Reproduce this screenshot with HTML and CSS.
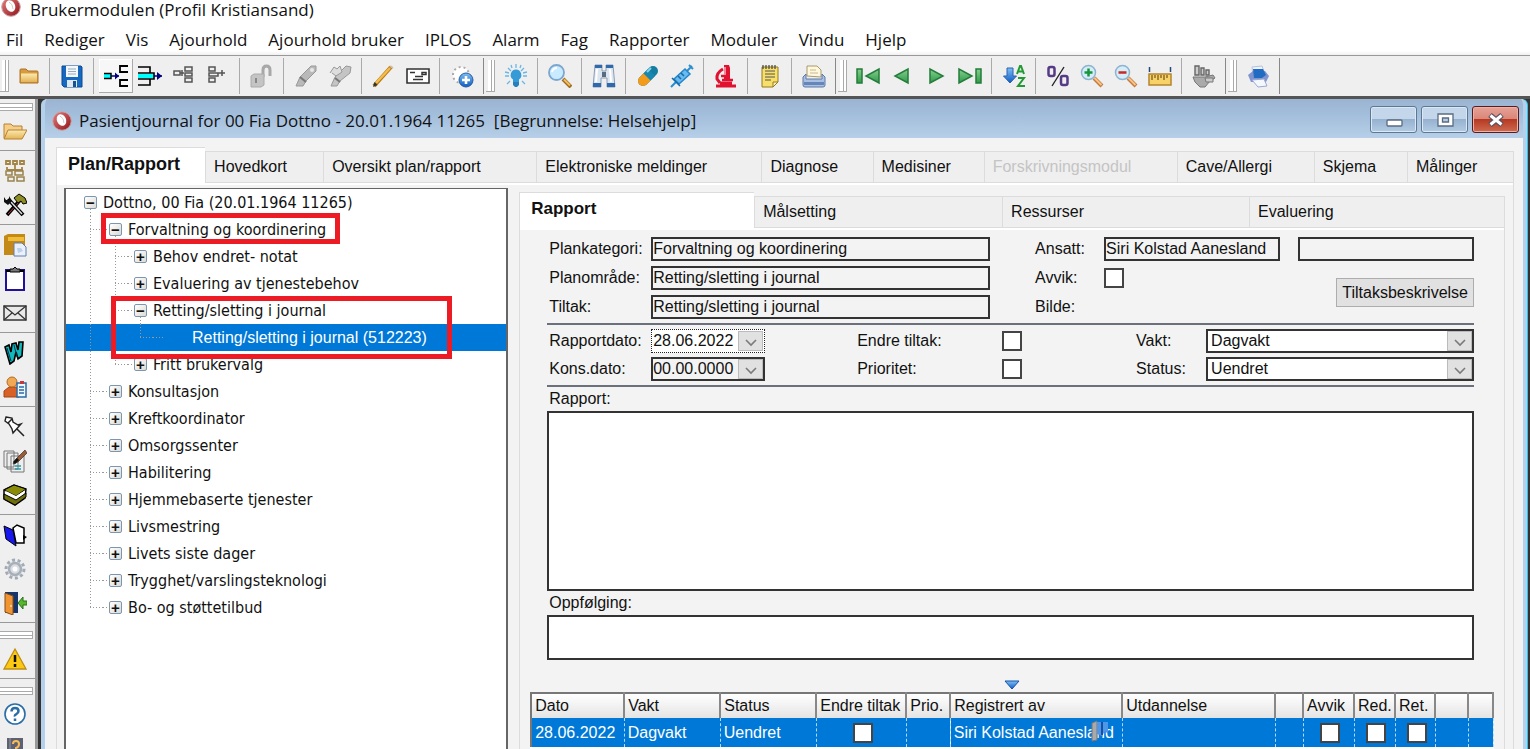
FILE: index.html
```html
<!DOCTYPE html>
<html lang="no">
<head>
<meta charset="utf-8">
<title>Brukermodulen (Profil Kristiansand)</title>
<link rel="stylesheet" href="styles.css">
</head>
<body>
<svg class="defs" aria-hidden="true">
  <defs>
    <linearGradient id="gGold" x1="0" y1="0" x2="0" y2="1"><stop offset="0" stop-color="#fbe9b4"/><stop offset="1" stop-color="#e5b454"/></linearGradient>
    <linearGradient id="gBlue" x1="0" y1="0" x2="0" y2="1"><stop offset="0" stop-color="#7cc0f5"/><stop offset="1" stop-color="#0f5bc4"/></linearGradient>
    <linearGradient id="gGreen" x1="0" y1="0" x2="0" y2="1"><stop offset="0" stop-color="#86cf90"/><stop offset="1" stop-color="#2f9a48"/></linearGradient>
    <linearGradient id="gRed" x1="0" y1="0" x2="1" y2="1"><stop offset="0" stop-color="#e58080"/><stop offset="1" stop-color="#8e1118"/></linearGradient>
    <symbol id="logo" viewBox="0 0 20 20"><circle cx="10" cy="10" r="9.300" fill="url(#gRed)" stroke="#c9a9a9"/><ellipse cx="9.500" cy="9" rx="4.500" ry="6" fill="#fff" transform="rotate(-25 9.500 9)"/><path d="M8 5q4 2 4 7" fill="none" stroke="#ccc"/></symbol>
    <symbol id="chev" viewBox="0 0 16 16"><path d="M3 7l5 5 5-5" fill="none" stroke="#7a7a7a" stroke-width="1.600"/></symbol>
  </defs>
</svg>

<header class="app-title"><svg class="logo"><use href="#logo"/></svg><span>Brukermodulen (Profil Kristiansand)</span></header>
<nav class="menu">
  <button>Fil</button><button>Rediger</button><button>Vis</button><button>Ajourhold</button><button>Ajourhold bruker</button><button>IPLOS</button><button>Alarm</button><button>Fag</button><button>Rapporter</button><button>Moduler</button><button>Vindu</button><button>Hjelp</button>
</nav>

<div class="toolbar">
  <div class="band">
    <i class="grip"></i>
    <div class="grp"><button aria-label="Åpne"><svg viewBox="0 0 24 24"><path d="M3 19V6q0-1 1-1h5l2 2h9q1 0 1 1v11z" fill="#d99c3c" stroke="#a87325"/><path d="M4 9.500h16V18H4z" fill="url(#gGold)"/></svg></button></div>
    <div class="grp"><button aria-label="Lagre"><svg viewBox="0 0 24 24"><path d="M2 2h19l1 1v20H4l-2-2z" fill="#1769c0" stroke="#0b4a94"/><path d="M6 2h12v11H6z" fill="#f4f8fc"/><path d="M8 5h8M8 7.500h8M8 10h8" stroke="#9ab"/><path d="M7 16h10v7H7z" fill="#dfe7ef"/><path d="M13 17h3v6h-3z" fill="#1a4f94"/></svg></button></div>
    <div class="grp"><button class="raised" aria-label="Sett inn"><svg viewBox="0 0 24 24"><path d="M0 9.500h7v5H0" fill="#0ff" stroke="#000" stroke-width="1.500"/><path d="M7 12h8" stroke="#00007a" stroke-width="1.500"/><path d="M11 8.500v7l4-3.500z" fill="#00007a"/><path d="M24 2h-8v6h8M24 16h-8v6h8" fill="none" stroke="#000" stroke-width="1.800"/></svg></button><button aria-label="Flytt ut"><svg viewBox="0 0 24 24"><path d="M0 3h12v6H0M0 15h12v6H0M12 9h4v6h-4" fill="none" stroke="#000" stroke-width="1.600"/><path d="M0 10h15v4H0z" fill="#0ff"/><path d="M16 12h8" stroke="#00007a" stroke-width="1.500"/><path d="M19 8v8l5-4z" fill="#00007a"/></svg></button><button aria-label="Nivå inn"><svg viewBox="0 0 24 24"><path d="M2 7h6v4H2zM13 3h7v4h-7zM13 9h7v3h-7zM13 14h7v4h-7zM8 9h4M10 6v6" fill="none" stroke="#555" stroke-width="1.500"/></svg></button><button aria-label="Nivå ut"><svg viewBox="0 0 24 24"><path d="M3 3h6v4H3zM3 9h9v3H3zM3 14h6v4H3zM12 9h7M16 6v6" fill="none" stroke="#555" stroke-width="1.500"/></svg></button></div>
    <div class="grp"><button aria-label="Lås opp"><svg viewBox="0 0 24 24"><path d="M13 13V6q0-4 3.500-4T20 6v6" fill="none" stroke="#a8a8a8" stroke-width="3"/><path d="M1 12l3-2h10v11l-3 2H1z" fill="#c4c4c4" stroke="#aaa"/><path d="M6 14v5" stroke="#888" stroke-width="2"/></svg></button></div>
    <div class="grp"><button aria-label="Signer"><svg viewBox="0 0 24 24"><path d="M2 22l4-9L17 2l5 0 0 5-10 10-3 5z" fill="#b9b9b9" stroke="#999"/><path d="M6 13l6 5" stroke="#777" stroke-width="2"/><circle cx="18" cy="6" r="2" fill="#e8e8e8"/></svg></button><button aria-label="Signer alle"><svg viewBox="0 0 24 24"><path d="M3 22l4-9L18 2l5 1-1 6-10 8-3 5z" fill="#c4c4c4" stroke="#999"/><path d="M2 9l4-6 3 2 3-3 2 6-6 4-4-3" fill="#ddd" stroke="#999"/><path d="M7 14l5 4" stroke="#777" stroke-width="2"/></svg></button></div>
    <div class="grp"><button aria-label="Rediger"><svg viewBox="0 0 24 24"><path d="M2 22L19 3" stroke="#b87913" stroke-width="4"/><path d="M4 19L18 4" stroke="#f6bd4e" stroke-width="2.400"/><path d="M1 23l1.500-5 3 3z" fill="#333"/><path d="M18 2l3 2" stroke="#d4bca0" stroke-width="2"/></svg></button><button aria-label="Brev"><svg viewBox="0 0 24 24"><path d="M1 5h22v14H1z" fill="#fff" stroke="#333" stroke-width="1.600"/><path d="M4 8.500h5M16 8.500h4v2h-4zM9 12.500h8M7 15.500h10" fill="none" stroke="#333" stroke-width="1.500"/></svg></button></div>
    <div class="grp"><button aria-label="Legg til"><svg viewBox="0 0 24 24"><circle cx="11" cy="11" r="8" fill="#fff" stroke="#aaa" stroke-width="2" stroke-dasharray="2 3"/><circle cx="16" cy="16" r="7" fill="url(#gBlue)" stroke="#295c9e"/><path d="M16 12v8M12 16h8" stroke="#fff" stroke-width="2.600"/></svg></button></div>
  </div>
  <div class="band">
    <i class="grip"></i>
    <div class="grp wide"><button aria-label="Tips"><svg viewBox="0 0 24 24"><path d="M12 0v4M1 12h4M19 12h4M4 4l3 3M20 4l-3 3M3 20l3-3M21 20l-3-3M7 1l1 3M17 1l-1 3M1 8l4 1M23 8l-4 1" stroke="#6bb6e4" stroke-width="1.300"/><path d="M12 5.500a5.500 5.500 0 0 1 3 10V18H9v-2.500a5.500 5.500 0 0 1 3-10z" fill="#359bd6"/><path d="M9 18h6v3l-2 2h-2l-2-2z" fill="#2481bd"/></svg></button></div>
    <div class="grp"><button aria-label="Søk"><svg viewBox="0 0 24 24"><path d="M15 15l8 8" stroke="#a06b1f" stroke-width="4"/><path d="M16 15.500l6 6" stroke="#f0bd62" stroke-width="2"/><circle cx="8.500" cy="8.500" r="7.500" fill="#c9ebff" stroke="#7aa6cf" stroke-width="1.800"/><path d="M4 8q1-4 5-4" fill="none" stroke="#fff" stroke-width="2"/></svg></button></div>
    <div class="grp"><button aria-label="Kikkert"><svg viewBox="0 0 24 24"><path d="M3 1h7v6h4V1h7l2 22h-8v-9H9v9H1z" fill="#dce6f1" stroke="#8b9db5"/><path d="M3 1h7v3H3zM14 1h7v3h-7zM1 19h8v4H1zM15 19h8v4h-8z" fill="#2f6aad"/><path d="M5 5L4 18M18 5l1 13" stroke="#fff" stroke-width="2"/><path d="M10 8h4v5h-4z" fill="#596b80"/></svg></button></div>
    <div class="grp"><button aria-label="Medisin"><svg viewBox="0 0 24 24"><path d="M7 17L17 7" stroke="#157ca2" stroke-width="10" stroke-linecap="round"/><path d="M7 17l4-4" stroke="#f59b1a" stroke-width="10" stroke-linecap="round"/><path d="M7.500 9.500L12 5l7 7-4.500 4.500z" fill="#1988b1"/><path d="M11 8l4-4" stroke="#88d2ea" stroke-width="2"/></svg></button><button aria-label="Vaksine"><svg viewBox="0 0 24 24"><path d="M1 23l5-5M17 7l5-5M19 1l4 4" stroke="#2b8ed0" stroke-width="2"/><path d="M4 15L15 5l5 5L9 20z" fill="#68baf0" stroke="#2386c8" stroke-width="1.500"/><path d="M2 14l8 8M8 12l3 3M11 9l3 3" stroke="#176aa5" stroke-width="1.500"/></svg></button></div>
    <div class="grp"><button aria-label="Laboratorium"><svg viewBox="0 0 24 24"><path d="M10 1h5l1 3v11h-6z" fill="#e01230"/><path d="M9 5Q2 9 3 15l3 4M2 22h20M6 19h12" fill="none" stroke="#e01230" stroke-width="3"/><path d="M7 12h4M8 16h11" stroke="#e01230" stroke-width="2.500"/><path d="M11 3v8" stroke="#fff"/></svg></button></div>
    <div class="grp"><button aria-label="Notat"><svg viewBox="0 0 24 24"><path d="M4 3h16v15l-5 5H4z" fill="#f8df69" stroke="#947b20"/><path d="M7 7h10M7 10h10M7 13h10M7 16h6" stroke="#555"/><path d="M5 1v4M8 1v4M11 1v4M14 1v4M17 1v4" stroke="#444" stroke-width="1.200"/><path d="M15 23v-5h5z" fill="#fff4b0" stroke="#947b20"/></svg></button></div>
    <div class="grp"><button aria-label="Skriv ut"><svg viewBox="0 0 24 24"><path d="M5 12V2h10l4 4v7z" fill="#fff8df" stroke="#a79a70"/><path d="M8 6h6M8 9h8" stroke="#c8b88b"/><path d="M1 13l3-3v5h16v-5l3 3v8q0 2-2 2H3q-2 0-2-2z" fill="#a9c0e2" stroke="#5c78a7"/><path d="M2 18h20v3H2z" fill="#6685b8"/></svg></button></div>
  </div>
  <div class="band">
    <i class="grip"></i>
    <div class="grp wide"><button aria-label="Første"><svg viewBox="0 0 24 24"><path d="M1 5h5v14H1zM23 5v14L10 12z" fill="url(#gGreen)" stroke="#247c3a" stroke-width="1.500"/></svg></button><button aria-label="Forrige"><svg viewBox="0 0 24 24"><path d="M18 5v14L5 12z" fill="url(#gGreen)" stroke="#247c3a" stroke-width="1.500"/></svg></button><button aria-label="Neste"><svg viewBox="0 0 24 24"><path d="M6 5v14l13-7z" fill="url(#gGreen)" stroke="#247c3a" stroke-width="1.500"/></svg></button><button aria-label="Siste"><svg viewBox="0 0 24 24"><path d="M18 5h5v14h-5zM1 5v14l13-7z" fill="url(#gGreen)" stroke="#247c3a" stroke-width="1.500"/></svg></button></div>
    <div class="grp"><button aria-label="Sorter"><svg viewBox="0 0 24 24"><path d="M5 4h6v8h3.500L8 19l-6.500-7H5z" fill="url(#gBlue)" stroke="#2c62ae"/><path d="M15 10l3-8h1l3 8M16 7.500h5M16 14h6l-6 8h7" fill="none" stroke="#229a34" stroke-width="2"/></svg></button></div>
    <div class="grp"><button aria-label="Prosent"><svg viewBox="0 0 24 24"><rect x="2.500" y="3" width="6" height="9" rx="2" fill="none" stroke="#553a85" stroke-width="2.500"/><rect x="15" y="12" width="6.500" height="9" rx="2" fill="none" stroke="#553a85" stroke-width="2.500"/><path d="M6 22L18 3" stroke="#222" stroke-width="1.400"/></svg></button><button aria-label="Zoom inn"><svg viewBox="0 0 24 24"><path d="M14 14l8 8" stroke="#c17c40" stroke-width="4"/><path d="M14.500 14l7 7" stroke="#fbc285" stroke-width="2"/><circle cx="8.500" cy="8.500" r="7" fill="#d5edf8" stroke="#8db4d0" stroke-width="1.500"/><path d="M8.500 4.500v8M4.500 8.500h8" stroke="#18953a" stroke-width="2.500"/></svg></button><button aria-label="Zoom ut"><svg viewBox="0 0 24 24"><path d="M14 14l8 8" stroke="#c17c40" stroke-width="4"/><path d="M14.500 14l7 7" stroke="#fbc285" stroke-width="2"/><circle cx="8.500" cy="8.500" r="7" fill="#d5edf8" stroke="#8db4d0" stroke-width="1.500"/><path d="M4.500 8.500h8" stroke="#c32b25" stroke-width="2.500"/></svg></button><button aria-label="Mål"><svg viewBox="0 0 24 24"><path d="M1.500 3v5M22.500 3v5" stroke="#244b7c" stroke-width="1.500"/><path d="M1 10h22v11H1z" fill="#f6d268" stroke="#b3862e" stroke-width="1.500"/><path d="M4 11v5M7 11v3M10 11v5M13 11v3M16 11v5M19 11v3" stroke="#765315" stroke-width="1.200"/></svg></button></div>
    <div class="grp"><button aria-label="Pleie"><svg viewBox="0 0 24 24"><path d="M3 2h4v9H3zM9 4h3v7H9zM14 6h3v5h-3z" fill="#ccc" stroke="#666" stroke-width="1.400"/><path d="M1 13h12l8-2 2 3-5 3-5 6H8l-5-5z" fill="#aaa" stroke="#777"/><path d="M13 14h8v4h-7z" fill="#ccc" stroke="#777"/></svg></button></div>
  </div>
  <div class="band">
    <i class="grip"></i>
    <div class="grp wide"><button aria-label="Skriver"><svg viewBox="0 0 24 24"><path d="M6 3l10-1 3 8-12 2z" fill="#eef3fc" stroke="#b6c2dc"/><path d="M2 11l5-4h12l4 5-3 6H5z" fill="#8094cf"/><path d="M7 5h10l3 6-4 3H8z" fill="#216cc2"/><path d="M6 16l12-1 3 7-9 1z" fill="#f5f7ff" stroke="#9ca9ce"/></svg></button></div>
  </div>
</div>

<div class="workspace">
  <aside class="side">
    <i class="hgrip"></i>
    <div class="sgrp"><button aria-label="Åpne mappe"><svg viewBox="0 0 24 24"><path d="M1 19V5h7l2 2h9v4" fill="#f3cf89" stroke="#b8812f"/><path d="M1 20l4-9h19l-5 9z" fill="url(#gGold)" stroke="#b8812f"/></svg></button></div>
    <div class="sgrp"><button aria-label="Organisasjon"><svg viewBox="0 0 24 24"><path d="M3 2h4v3H3zM10 2h4v3h-4zM17 2h4v3h-4zM4 8v3M12 6v6M19 8v4M4 11h16" fill="none" stroke="#a38646" stroke-width="1.800"/><path d="M3 12h6v4H3zM12 12h8v4h-8zM5 18h6v4H5zM14 18h7v4h-7z" fill="#eee" stroke="#9b834c" stroke-width="1.500"/></svg></button><button aria-label="Verktøy"><svg viewBox="0 0 24 24"><path d="M4 22L18 6" stroke="#000" stroke-width="3.500"/><path d="M5 21L17 8" stroke="#b33838"/><path d="M11 5l5-4 6 4 2 5-4 1-2-3-3 2z" fill="#8d8d24" stroke="#000"/><path d="M5 6l15 16" stroke="#000" stroke-width="4"/><path d="M8 9l11 12" stroke="#ddd" stroke-width="1.500"/><path d="M1 4v5l4 3 4-4-3-5v4H3z" fill="#111"/></svg></button></div>
    <div class="sgrp"><button aria-label="Dokumenter"><svg viewBox="0 0 24 24"><path d="M1 3l4-2h17v19l-3 2H1z" fill="#c48a18"/><path d="M5 4h16v4H5z" fill="#f0bd38"/><path d="M11 10h8l4 4v9H11z" fill="#eaf1fb" stroke="#607eb0"/><path d="M14 15h4l2 3-5 2z" fill="#bdd0ec"/></svg></button><button aria-label="Utklippstavle"><svg viewBox="0 0 24 24"><path d="M3 3h18v20H3z" fill="#fff" stroke="#20109a" stroke-width="2"/><path d="M3 4h18" stroke="#000" stroke-width="2"/><path d="M7 5V2h3l2-2 2 2h3v3z" fill="#777" stroke="#000"/></svg></button><button aria-label="Melding"><svg viewBox="0 0 24 24"><path d="M1 5h22v14H1z" fill="#e8e8e8" stroke="#333" stroke-width="1.500"/><path d="M1 5l11 9L23 5M1 19l8-7M23 19l-8-7" fill="none" stroke="#333" stroke-width="1.300"/></svg></button></div>
    <div class="sgrp"><button aria-label="Word"><svg viewBox="0 0 24 24"><path d="M2 6l4-2 2 7 1-8 4-1 2 7 1-8 4 0-1 14-4 3-2-7-2 9-4 3z" fill="#12b9b9" stroke="#000" stroke-width="1.600"/><path d="M4 7l4 13M11 4l3 12" stroke="#035"/></svg></button><button aria-label="Bruker"><svg viewBox="0 0 24 24"><path d="M1 22v-6l5-4h7l3 4v6z" fill="#d86125" stroke="#a34717"/><circle cx="9" cy="7" r="5" fill="#f2a955" stroke="#b06c26"/><path d="M14 8h9v14h-9z" fill="#edf7ff" stroke="#2c6ba4" stroke-width="1.500"/><path d="M16 12h5M16 15h5M16 18h5" stroke="#2c6ba4" stroke-width="1.300"/><path d="M17 6h4v3h-4z" fill="#cc3636"/></svg></button></div>
    <div class="sgrp"><button aria-label="Fest"><svg viewBox="0 0 24 24"><path d="M3 2l6 1 1 4 5 3 3-1-8 9-1-4-3-5-4-3z" fill="#fff" stroke="#222" stroke-width="1.400"/><path d="M14 14l7 7M9 4L5 8" stroke="#222" stroke-width="1.500"/></svg></button><button aria-label="Skriv notat"><svg viewBox="0 0 24 24"><path d="M1 2h10v16H1zM4 4h11v16H4zM8 7h13v16H8z" fill="#eee" stroke="#777"/><path d="M10 15l3-5 9-9 2 3-9 9z" fill="#9b5b35" stroke="#333" stroke-width=".7"/><path d="M11 14l4-4" stroke="#111" stroke-width="3"/><path d="M12 17h6M12 20h6" stroke="#2a9ba4" stroke-width="1.500"/></svg></button><button aria-label="Bøker"><svg viewBox="0 0 24 24"><path d="M1 7L11 2l12 4-1 9-10 7L1 16z" fill="#fff" stroke="#000" stroke-width="1.500"/><path d="M1 7L11 2l12 4-10 7z" fill="#8b8b0a" stroke="#000"/><path d="M1 11l12 6 10-7v4l-11 8L1 16z" fill="#6e6e0a" stroke="#000"/><path d="M3 9l10 5 8-5" fill="none" stroke="#fff" stroke-width="1.500"/></svg></button></div>
    <div class="sgrp"><button aria-label="Journal"><svg viewBox="0 0 24 24"><path d="M10 5l4-3 7 3v15h-8z" fill="#fff" stroke="#000" stroke-width="1.500"/><path d="M1 3l9 4 3 16-10-7z" fill="#1717ee" stroke="#000"/><path d="M20 12l4 2-4 3" fill="#000"/></svg></button><button aria-label="Innstillinger"><svg viewBox="0 0 24 24"><circle cx="12" cy="12" r="9" fill="none" stroke="#a2aab5" stroke-width="3" stroke-dasharray="3 2.600"/><circle cx="12" cy="12" r="6" fill="#d9dde2" stroke="#a7afb8" stroke-width="2.500"/><circle cx="12" cy="12" r="2.500" fill="#fff"/></svg></button><button aria-label="Avslutt"><svg viewBox="0 0 24 24"><path d="M2 1h13v21H2z" fill="#15356b"/><path d="M2 2l8 3v19l-8-3z" fill="#f19432" stroke="#874d16"/><path d="M8 14v2" stroke="#fff"/><path d="M24 10h-4V6l-5 6 5 6v-4h4z" fill="#57b52e" stroke="#277217"/></svg></button></div>
    <i class="hgrip"></i>
    <div class="sgrp"><button aria-label="Varsel"><svg viewBox="0 0 24 24"><path d="M12 2l11 20H1z" fill="#fbc914" stroke="#bd8d16" stroke-width="1.300"/><path d="M12 8v7M12 17v3" stroke="#111" stroke-width="2.500"/></svg></button></div>
    <i class="hgrip"></i>
    <div class="sgrp last"><button aria-label="Hjelp"><svg viewBox="0 0 24 24"><circle cx="12" cy="12" r="10" fill="#fff" stroke="#286da7" stroke-width="1.600"/><path d="M8.500 9.500q0-3.500 3.500-3.500t3.500 3q0 2-2 3T12 14.500M12 16.500v2.500" fill="none" stroke="#286da7" stroke-width="2.500"/></svg></button><button aria-label="Hjelpebok"><svg viewBox="0 0 24 24"><path d="M4 2h16v20H4z" fill="#5e6172"/><path d="M7 2v20" stroke="#999"/><path d="M10 8q0-3 3-3t3 3-3 4v2M13 16v2" fill="none" stroke="#f7bd54" stroke-width="2"/></svg></button></div>
  </aside>

  <main class="window">
    <div class="win-title">
      <svg class="logo"><use href="#logo"/></svg>
      <span class="win-name">Pasientjournal for 00 Fia Dottno - 20.01.1964 11265&nbsp; [Begrunnelse: Helsehjelp]</span>
      <span class="win-btns">
        <button aria-label="Minimer"><svg viewBox="0 0 20 16"><rect x="3" y="8" width="15" height="6" rx="1" fill="#fff" stroke="#596b82" stroke-width="1.300"/></svg></button>
        <button aria-label="Maksimer"><svg viewBox="0 0 20 16"><path d="M3 2h15v12H3z" fill="#fff" stroke="#596b82" stroke-width="1.300"/><path d="M7.500 6h6v4h-6z" fill="#b9cbe0" stroke="#596b82" stroke-width="1.300"/></svg></button>
        <button class="close" aria-label="Lukk"><svg viewBox="0 0 20 16"><path d="M4 3l12 10M16 3L4 13" stroke="#555063" stroke-width="5.500"/><path d="M4.500 3.500l11 9M15.500 3.500l-11 9" stroke="#fff" stroke-width="3"/></svg></button>
      </span>
    </div>
    <div class="win-body">
      <div class="tabs main-tabs" role="tablist">
        <button class="tab on">Plan/Rapport</button><button class="tab">Hovedkort</button><button class="tab">Oversikt plan/rapport</button><button class="tab">Elektroniske meldinger</button><button class="tab">Diagnose</button><button class="tab">Medisiner</button><button class="tab off" disabled>Forskrivningsmodul</button><button class="tab">Cave/Allergi</button><button class="tab">Skjema</button><button class="tab">Målinger</button>
      </div>
      <div class="panel">
        <div class="tree">
          <ul>
            <li><i class="c open"><b>−</b></i>Dottno, 00 Fia (20.01.1964 11265)</li>
            <li><i class="c tee"></i><i class="c arm open"><b>−</b></i>Forvaltning og koordinering</li>
            <li><i class="c bar"></i><i class="c tee"></i><i class="c arm"><b>+</b></i>Behov endret- notat</li>
            <li><i class="c bar"></i><i class="c tee"></i><i class="c arm"><b>+</b></i>Evaluering av tjenestebehov</li>
            <li><i class="c bar"></i><i class="c tee"></i><i class="c arm open"><b>−</b></i>Retting/sletting i journal</li>
            <li class="sel"><i class="c bar"></i><i class="c bar"></i><i class="c end"></i><i class="c arm"></i><span class="leaf">Retting/sletting i journal (512223)</span></li>
            <li><i class="c bar"></i><i class="c end"></i><i class="c arm"><b>+</b></i>Fritt brukervalg</li>
            <li><i class="c tee"></i><i class="c arm"><b>+</b></i>Konsultasjon</li>
            <li><i class="c tee"></i><i class="c arm"><b>+</b></i>Kreftkoordinator</li>
            <li><i class="c tee"></i><i class="c arm"><b>+</b></i>Omsorgssenter</li>
            <li><i class="c tee"></i><i class="c arm"><b>+</b></i>Habilitering</li>
            <li><i class="c tee"></i><i class="c arm"><b>+</b></i>Hjemmebaserte tjenester</li>
            <li><i class="c tee"></i><i class="c arm"><b>+</b></i>Livsmestring</li>
            <li><i class="c tee"></i><i class="c arm"><b>+</b></i>Livets siste dager</li>
            <li><i class="c tee"></i><i class="c arm"><b>+</b></i>Trygghet/varslingsteknologi</li>
            <li><i class="c end"></i><i class="c arm"><b>+</b></i>Bo- og støttetilbud</li>
          </ul>
          <span class="mark mark-a"></span>
          <span class="mark mark-b"></span>
        </div>

        <section class="detail">
          <div class="tabs sub-tabs" role="tablist">
            <button class="tab on">Rapport</button><button class="tab">Målsetting</button><button class="tab">Ressurser</button><button class="tab">Evaluering</button>
          </div>
          <form class="sheet">
            <div class="fields">
              <div class="top">
                <label for="kat">Plankategori:</label><input id="kat" class="a" value="Forvaltning og koordinering" readonly>
                <label for="ans" class="b">Ansatt:</label><input id="ans" value="Siri Kolstad Aanesland" readonly><input class="d" aria-label="Ansatt 2" readonly>
                <label for="omr">Planområde:</label><input id="omr" class="a" value="Retting/sletting i journal" readonly>
                <label for="avv" class="b">Avvik:</label><input type="checkbox" id="avv">
                <label for="til">Tiltak:</label><input id="til" class="a" value="Retting/sletting i journal" readonly>
                <span class="b">Bilde:</span>
                <button type="button" class="desc">Tiltaksbeskrivelse</button>
              </div>
              <div class="mid">
                <label for="rd">Rapportdato:</label>
                <div class="combo dotted"><input id="rd" value="28.06.2022"><button type="button" class="drop" aria-label="Velg dato"><svg><use href="#chev"/></svg></button></div>
                <label for="et" class="m">Endre tiltak:</label><input type="checkbox" id="et">
                <label for="vk" class="v">Vakt:</label>
                <div class="combo"><select id="vk"><option>Dagvakt</option></select><span class="drop"><svg><use href="#chev"/></svg></span></div>
                <label for="kd">Kons.dato:</label>
                <div class="combo grey"><input id="kd" value="00.00.0000"><button type="button" class="drop" aria-label="Velg dato"><svg><use href="#chev"/></svg></button></div>
                <label for="pr" class="m">Prioritet:</label><input type="checkbox" id="pr">
                <label for="st" class="v">Status:</label>
                <div class="combo"><select id="st"><option>Uendret</option></select><span class="drop"><svg><use href="#chev"/></svg></span></div>
              </div>
              <label class="area" for="rap">Rapport:</label>
              <textarea id="rap" class="big"></textarea>
              <label class="area" for="opp">Oppfølging:</label>
              <textarea id="opp" class="small"></textarea>
            </div>
            <svg class="fold" viewBox="0 0 16 10"><path d="M1 1h14L8 9z" fill="url(#gBlue)" stroke="#1450a8"/></svg>
            <table>
              <colgroup><col class="w93"><col class="w96"><col class="w96"><col class="w90"><col class="w44"><col class="w172"><col><col class="w28"><col class="w51"><col class="w41"><col class="w40"><col class="w33"><col class="w25"></colgroup>
              <thead><tr><th>Dato</th><th>Vakt</th><th>Status</th><th>Endre tiltak</th><th>Prio.</th><th>Registrert av</th><th>Utdannelse</th><th></th><th>Avvik</th><th>Red.</th><th>Ret.</th><th></th><th></th></tr></thead>
              <tbody><tr><td>28.06.2022</td><td>Dagvakt</td><td>Uendret</td><td class="mid-cell"><input type="checkbox" aria-label="Endre tiltak"></td><td></td><td class="who">Siri Kolstad Aanesland<svg class="flag" viewBox="0 0 18 22"><path d="M1 3l5-2v19l-5 1z" fill="#a9a9a9" stroke="#777"/><path d="M6 2h11v12l-3-3-3 5-5-2z" fill="#4f97e6"/><path d="M11 2v13" stroke="#1450a8" stroke-width="2"/></svg></td><td></td><td></td><td class="mid-cell"><input type="checkbox" aria-label="Avvik"></td><td class="mid-cell"><input type="checkbox" aria-label="Red."></td><td class="mid-cell"><input type="checkbox" aria-label="Ret."></td><td></td><td></td></tr></tbody>
            </table>
            <div class="rest"></div>
          </form>
        </section>
      </div>
    </div>
  </main>
</div>
</body>
</html>
```

FILE: styles.css
```css
* { box-sizing: border-box; }
html, body { height: 100%; }
body { margin: 0; display: flex; flex-direction: column; overflow: hidden; background: #fff; color: #111; font: 16px/20px "Liberation Sans", Arial, sans-serif; }
button, input, select, textarea { font: inherit; color: inherit; margin: 0; padding: 0; border: 0; background: none; border-radius: 0; outline: 0; }
button svg { display: block; }
.defs { position: absolute; width: 0; height: 0; }
.logo { width: 20px; height: 20px; flex: none; }

/* Application title and menu */
.app-title { flex: none; display: flex; align-items: center; gap: 9px; height: 20px; padding-left: 1px; font: 17px/20px "Open Sans", "Noto Sans", sans-serif; }
.app-title .logo { margin-top: -6px; }
.menu { flex: none; display: flex; height: 35px; padding: 6px 0 0 6px; gap: 21px; align-items: flex-start; background: linear-gradient(#fff 31px, #f0f0f0); font: 17px/28px "Open Sans", "Noto Sans", sans-serif; }

/* Toolbar */
.toolbar { flex: none; display: flex; height: 44px; padding: 2px 0; gap: 2px; background: #efefef; border-top: 1px solid #999; border-bottom: 3px solid #555; }
.band { display: flex; border-right: 1px solid #888; }
.grip { width: 9px; margin: 2px 0; border: solid #aaa; border-width: 0 1px 1px 0; background: linear-gradient(90deg, transparent 2px, #fff 2px, #fff 5px, #aaa 5px, #aaa 6px, #fff 6px); }
.grp { display: flex; align-items: center; padding: 0 4px 0 5px; border-left: 1px solid #aaa; }
.grip + .grp { border-left: 0; padding: 0 3px; }
.grip + .wide { padding: 0 4px; }
.grp button { width: 34px; height: 34px; padding: 5px; }
.grp svg { width: 24px; height: 24px; }
.grp .raised { background: #f7f7f7; box-shadow: inset -1px -1px #aaa, inset 1px 1px #fff; }

/* Left icon bar */
.workspace { flex: 1; min-height: 0; display: flex; background: linear-gradient(90deg, #efefef 35px, #999 35px, #999 38px, #333 38px); }
.side { width: 35px; flex: none; padding-top: 4px; overflow: hidden; }
.hgrip { display: block; height: 8px; margin: 0 2px 0 0; border: solid #aaa; border-width: 1px 1px 1px 0; background: linear-gradient(#fff 3px, #aaa 3px, #aaa 4px, #fff 4px); }
.sgrp { padding: 3px 0 2px 3px; border-bottom: 1px solid #999; }
.sgrp + .hgrip { margin-top: 8px; }
.sgrp.last { padding-top: 2px; border: 0; }
.sgrp button { display: block; padding: 5px 0; height: 34px; }
.sgrp svg { width: 24px; height: 24px; }

/* Child window */
.window { flex: 1; min-width: 0; display: flex; flex-direction: column; margin: 0 3px 0 6px; border: solid #b5d0ea; border-width: 0 4px; border-radius: 6px 6px 0 0; box-shadow: 1px 0 #27c6ee; background: #f3f3f3; overflow: hidden; }
.win-title { flex: none; display: flex; align-items: center; height: 39px; margin: 0 -4px; padding: 2px 8px 0 11px; gap: 7px; background: linear-gradient(#9ab4d1, #a3bedb 40%, #b7cfe8); font: 17px/24px "Open Sans", "Noto Sans", sans-serif; }
.win-name { flex: 1; white-space: nowrap; padding-top: 3px; }
.win-title .logo { margin-top: 3px; }
.win-btns { display: flex; gap: 4px; }
.win-btns button { width: 47px; height: 27px; padding: 4px 13px; border: 1px solid #5f7892; border-radius: 3px; background: linear-gradient(#c4d6e9 50%, #96b2d0 50%, #b3cbe4); box-shadow: inset 0 0 0 1px #dbe8f5; }
.win-btns .close { border-color: #5c1a1c; background: linear-gradient(#e6a296, #d98577 50%, #b53a22 50%, #cf6a50); box-shadow: inset 0 0 0 1px #eab3a8; }
.win-btns svg { width: 20px; height: 16px; }
.win-body { flex: 1; min-height: 0; display: flex; flex-direction: column; padding: 9px 9px 0 11px; }

/* Tabs */
.tabs { flex: none; display: grid; align-items: end; }
.tab { height: 32px; padding: 0 0 0 8px; text-align: left; white-space: nowrap; background: #efefef; border: solid #dcdcdc; border-width: 1px 0 1px 1px; }
.tab:last-child { border-right-width: 1px; }
.tab.off { color: #c4c4c4; }
.tab.on { height: 36px; padding: 0 0 4px 11px; background: #fff; border-bottom: 0; font-weight: bold; }
.main-tabs { grid-template-columns: 149fr 118fr 213fr 225fr 111fr 111fr 193fr 137fr 93fr 107fr; }
.main-tabs .on { font-size: 18px; }
.sub-tabs { grid-template-columns: 235fr 248fr 247fr 256fr; }
.sub-tabs .on { font-size: 17px; }
.panel { flex: 1; min-height: 0; display: grid; grid-template-columns: 447fr 992fr; column-gap: 11px; padding: 5px 8px 0 7px; border: solid #dcdcdc; border-width: 0 1px; background: linear-gradient(#fff 2px, transparent 2px); }

/* Plan tree */
.tree { position: relative; min-height: 0; border: solid #666; border-width: 1px 2px 0; background: #fff; }
.tree ul { margin: 0; padding: 0; list-style: none; }
.tree li { display: flex; height: 27px; padding-left: 12px; font-family: "DejaVu Sans Condensed", "DejaVu Sans", sans-serif; line-height: 27px; white-space: nowrap; }
.tree .sel { background: #0078d7; color: #fff; font-family: "Liberation Sans", Arial, sans-serif; }
.leaf { padding-left: 14px; }
.c { flex: none; display: flex; align-items: center; justify-content: center; width: 25px; background-repeat: no-repeat;
  --dv: repeating-linear-gradient(#999 0 1px, transparent 1px 3px);
  --dh: repeating-linear-gradient(90deg, #999 0 1px, transparent 1px 3px); }
.bar { background-image: var(--dv); background-size: 1px 100%; background-position: 12px 0; }
.tee { background-image: var(--dv), var(--dh); background-size: 1px 100%, 13px 1px; background-position: 12px 0, 12px 13px; }
.end { background-image: var(--dv), var(--dh); background-size: 1px 14px, 13px 1px; background-position: 12px 0, 12px 13px; }
.arm { background-image: var(--dh); background-size: 12px 1px; background-position: 0 13px; }
.open { background-image: var(--dv); background-size: 1px 13px; background-position: 12px 14px; }
.arm.open { background-image: var(--dh), var(--dv); background-size: 12px 1px, 1px 13px; background-position: 0 13px, 12px 14px; }
.c b { width: 13px; height: 13px; border: 1px solid #7d96b0; border-radius: 2px; background: linear-gradient(135deg, #fff, #dcdad4); font: bold 15px/11px "Liberation Sans", Arial, sans-serif; text-align: center; }
.mark { position: absolute; border: 5px solid #ed1c24; }
.mark-a { left: 35px; top: 24px; width: 239px; height: 31px; }
.mark-b { left: 45px; top: 107px; width: 341px; height: 63px; }

/* Report form */
.detail { min-width: 0; display: flex; flex-direction: column; padding-top: 4px; }
.sheet { flex: 1; min-height: 0; display: flex; flex-direction: column; padding: 9px 10px 0; border: solid #dcdcdc; border-width: 0 1px; background: linear-gradient(#fff 2px, transparent 2px); }
.fields { display: flex; flex-direction: column; padding: 0 20px 0 17px; }
.top, .mid { display: grid; align-items: center; grid-auto-rows: 24px; border-bottom: 2px solid #6c6f7c; }
.top { grid-template-columns: 104px 339fr 45px 69px 176fr 18px 176fr; row-gap: 5px; padding-bottom: 4px; }
.mid { grid-template-columns: 104px 114px 92fr 145px 134fr 70px 268fr; row-gap: 4px; padding: 4px 0; }
.top label:not(.b), .mid label:not(.m):not(.v) { grid-column: 1; padding-left: 2px; }
.top .b { grid-column: 4; }
.top .d { grid-column: 7; }
.mid .m { grid-column: 4; }
.mid .v { grid-column: 6; }
.top input:not([type]) { width: 100%; height: 24px; border: 2px solid #333; }
input[type="checkbox"] { appearance: none; display: block; width: 20px; height: 20px; border: 2px solid #444; background: #fff; }
.top .desc { grid-column: 7; grid-row: 2 / 4; justify-self: end; height: 29px; padding: 0 5px; border: 1px solid #adadad; background: #e1e1e1; white-space: nowrap; }
.combo { display: flex; height: 24px; min-width: 0; border: 2px solid #333; background: #fff; }
.combo input, .combo select { flex: 1; min-width: 0; width: 0; appearance: none; }
.combo select { padding-left: 3px; }
.combo.dotted { border: 1px dotted #222; padding: 1px; }
.combo.grey { background: #f3f3f3; }
.drop { flex: none; display: flex; align-items: center; justify-content: center; width: 25px; border: 1px solid #bbb; background: #e1e1e1; }
.drop svg { width: 16px; height: 16px; }
.area { padding: 2px 0 0 2px; height: 24px; }
textarea { display: block; width: 100%; resize: none; border: 2px solid #333; background: #fff; }
.big { height: 180px; }
.small { height: 45px; }
.fold { width: 16px; height: 10px; margin: 20px 0 2px; align-self: center; }

/* Report list */
table { width: 100%; table-layout: fixed; border-collapse: collapse; border-top: 2px solid #777; border-left: 2px solid #777; }
th { height: 25px; padding: 0 0 0 3px; text-align: left; font-weight: normal; white-space: nowrap; border-right: 2px solid #888; background: linear-gradient(#fff, #e4e4e4); }
td { height: 29px; padding: 0 0 0 3px; white-space: nowrap; border-right: 1px dashed #b8d8f0; background: #0078d7; color: #fff; }
.mid-cell input { margin: 0 auto; }
.who { position: relative; }
.flag { position: absolute; left: 140px; top: 2px; width: 18px; height: 22px; }
.w93 { width: 93px; } .w96 { width: 96px; } .w90 { width: 90px; } .w44 { width: 44px; } .w172 { width: 172px; }
.w28 { width: 28px; } .w51 { width: 51px; } .w41 { width: 41px; } .w40 { width: 40px; } .w33 { width: 33px; } .w25 { width: 25px; }
.rest { flex: 1; background: #fff; }
```
